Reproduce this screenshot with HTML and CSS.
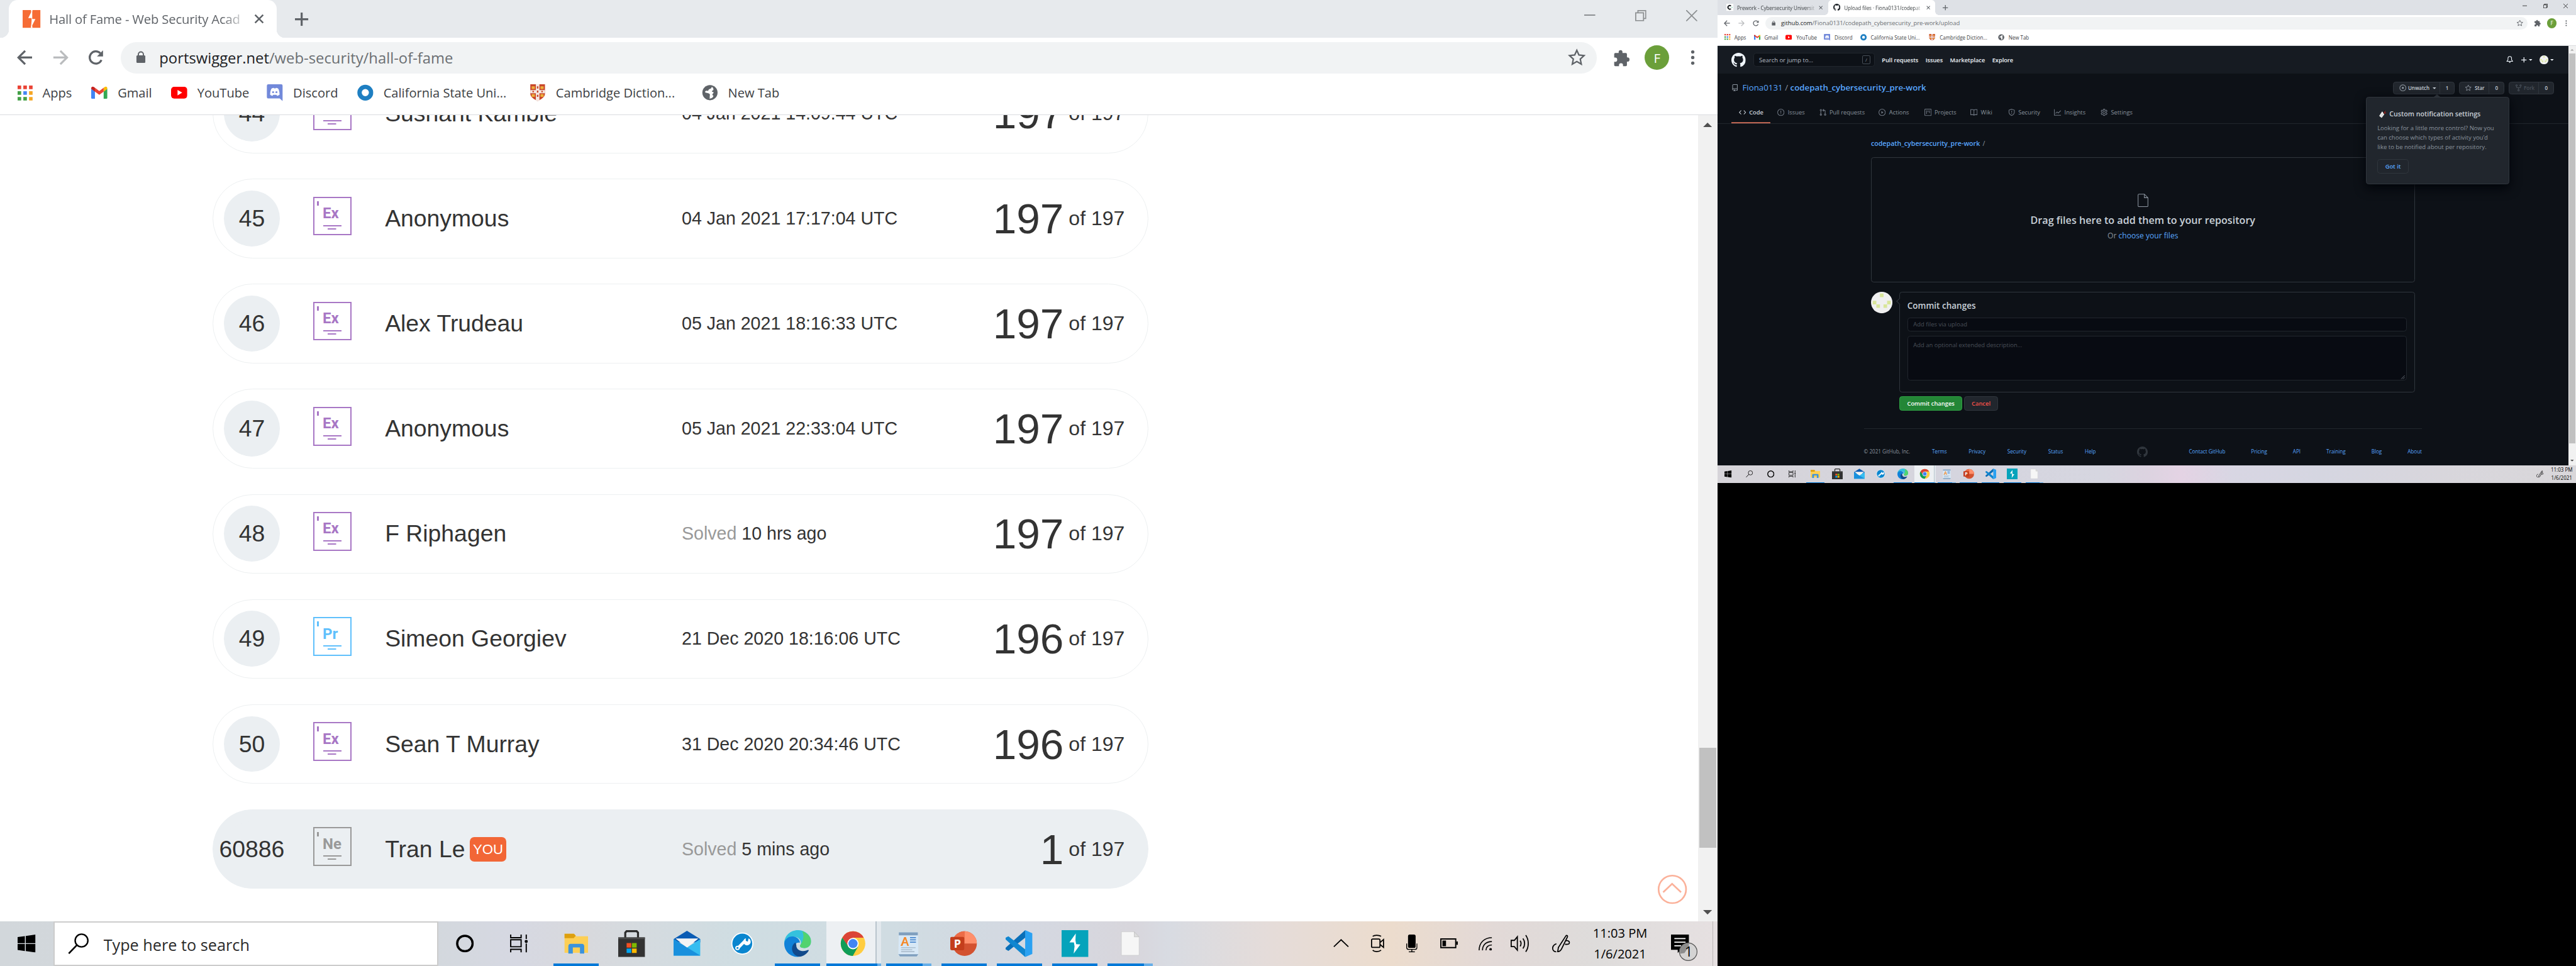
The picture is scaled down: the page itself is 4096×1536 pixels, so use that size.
FILE: index.html
```html
<!DOCTYPE html>
<html lang="en">
<head>
<meta charset="utf-8">
<title>Desktop</title>
<link rel="stylesheet" href="styles.css">
</head>
<body>
<svg class="defs" aria-hidden="true">
  <symbol id="i-bolt" viewBox="0 0 16 16"><rect width="16" height="16" fill="#f66c35"/><path d="M8.6 0 5 7.2h3v2.6L7.4 16 11.4 8H8.6V5z" fill="#fff"/><path d="M7.4 0h1.4L8 4zM7.4 16h1.4L8.300 12z" fill="#fff"/></symbol>
  <symbol id="i-x" viewBox="0 0 10 10"><path d="M1 1l8 8M9 1L1 9" stroke="currentColor" stroke-width="1.6"/></symbol>
  <symbol id="i-plus" viewBox="0 0 12 12"><path d="M6 0v12M0 6h12" stroke="currentColor" stroke-width="1.8"/></symbol>
  <symbol id="i-min" viewBox="0 0 10 10"><path d="M0 4.500h10" stroke="currentColor"/></symbol>
  <symbol id="i-restore" viewBox="0 0 10 10"><path d="M.5 2.500h7v7h-7zM2.500 2.500v-2h7v7h-2" fill="none" stroke="currentColor"/></symbol>
  <symbol id="i-close" viewBox="0 0 10 10"><path d="M0 0l10 10M10 0L0 10" stroke="currentColor"/></symbol>
  <symbol id="i-back" viewBox="0 0 14 14"><path d="M13.500 7H1.500M7.300 1L1.300 7l6 6" fill="none" stroke="currentColor" stroke-width="1.8"/></symbol>
  <symbol id="i-fwd" viewBox="0 0 14 14"><path d="M.5 7h12M6.700 1l6 6-6 6" fill="none" stroke="currentColor" stroke-width="1.8"/></symbol>
  <symbol id="i-reload" viewBox="0 0 14 14"><path d="M12 9.200A5.500 5.500 0 1 1 11 3.200" fill="none" stroke="currentColor" stroke-width="1.800"/><path d="M13.400.6v5.400H8z" fill="currentColor"/></symbol>
  <symbol id="i-lock" viewBox="0 0 10 12"><rect x=".6" y="4" width="8.800" height="7.500" rx="1" fill="currentColor"/><path d="M2.500 4.500V3a2.500 2.500 0 0 1 5 0v1.500" fill="none" stroke="currentColor" stroke-width="1.200"/></symbol>
  <symbol id="i-star" viewBox="0 0 16 16"><path d="M8 1.700l1.900 4.200 4.600.5-3.400 3.100.9 4.500-4-2.300L4 14l.9-4.500L1.500 6.400l4.600-.5z" fill="none" stroke="currentColor" stroke-width="1.300"/></symbol>
  <symbol id="i-puzzle" viewBox="0 0 16 16"><path d="M1.500 4.500a1 1 0 0 1 1-1H5.500V2.700a1.700 1.700 0 0 1 3.400 0v.8h3a1 1 0 0 1 1 1v3h.4a1.900 1.900 0 0 1 0 3.800h-.4v3a1 1 0 0 1-1 1H9.400v-.9a1.800 1.800 0 0 0-3.600 0v.9H2.500a1 1 0 0 1-1-1v-2.900h.8a1.900 1.900 0 0 0 0-3.800h-.8z" fill="currentColor"/></symbol>
  <symbol id="i-dots" viewBox="0 0 4 14"><g fill="currentColor"><circle cx="2" cy="2" r="1.500"/><circle cx="2" cy="7" r="1.500"/><circle cx="2" cy="12" r="1.500"/></g></symbol>
  <symbol id="i-apps" viewBox="0 0 14 14"><g fill="#ea4335"><path d="M0 0h3.300v3.300H0zM5.300 0h3.300v3.300H5.300zM10.600 0h3.300v3.300h-3.300z"/></g><path d="M0 5.300h3.300v3.300H0zM0 10.600h3.300v3.300H0z" fill="#43a047"/><path d="M5.300 5.300h3.300v3.300H5.300z" fill="#4285f4"/><path d="M5.300 10.600h3.300v3.300H5.300z" fill="#43a047"/><path d="M10.600 5.300h3.300v3.300h-3.300zM10.600 10.600h3.300v3.300h-3.300z" fill="#f5a623"/></symbol>
  <symbol id="i-gmail" viewBox="0 0 16 12"><path d="M0 2v9a1 1 0 0 0 1 1h2.700V4.700z" fill="#4285f4"/><path d="M16 2v9a1 1 0 0 1-1 1h-2.700V4.700z" fill="#34a853"/><path d="M12.300 1.200V5L16 2.300V1.600C16 .1 14.300-.4 13.200.5z" fill="#fbbc04"/><path d="M3.700 5V1.200L8 4.400l4.300-3.200V5L8 8.200z" fill="#ea4335"/><path d="M0 1.600v.7L3.700 5V1.200L2.800.5C1.700-.4 0 .1 0 1.600z" fill="#c5221f"/></symbol>
  <symbol id="i-yt" viewBox="0 0 16 12"><rect width="16" height="11.600" y=".2" rx="3" fill="#f00"/><path d="M6.400 3.300v5.400L11 6z" fill="#fff"/></symbol>
  <symbol id="i-discord" viewBox="0 0 16 17"><path d="M1.500 0h13A1.500 1.500 0 0 1 16 1.500V17l-3-2.600H1.500A1.500 1.500 0 0 1 0 13V1.500A1.500 1.500 0 0 1 1.500 0z" fill="#7289da"/><path d="M3.300 10.500c0-3 .8-5.300 1.500-6.200 1-.6 1.800-.7 2.200-.7l.3.600h1.600l.3-.6c.5 0 1.300.2 2.200.7.700.9 1.500 3.200 1.500 6.200-.8.8-1.800 1.100-2.600 1.100l-.6-.9H6.400l-.6.900c-.8 0-1.700-.3-2.500-1.100z" fill="#fff"/><circle cx="6.300" cy="8" r="1" fill="#7289da"/><circle cx="9.700" cy="8" r="1" fill="#7289da"/></symbol>
  <symbol id="i-csu" viewBox="0 0 16 16"><circle cx="8" cy="8" r="5.700" fill="#fff" stroke="#1e7fc2" stroke-width="4.300"/></symbol>
  <symbol id="i-camb" viewBox="0 0 14 16"><path d="M0 0h14v9c0 3.500-4 5.500-7 7-3-1.500-7-3.500-7-7z" fill="#c9472b"/><path d="M1.300 2h3v2.500h-3zM9.700 2h3v2.500h-3zM1.300 9.500h3V12h-3zM9.700 9.500h3V12h-3z" fill="#edb13c"/><path d="M5.300 0h3.400v16H5.300zM0 5.500h14v3H0z" fill="#f4e9e4"/><path d="M6.300 2h1.400v2H6.300zM6.300 6h1.400v2H6.300zM6.300 10h1.400v2H6.300zM2 6.300h1.500v1.300H2zM10.500 6.300H12v1.300h-1.500z" fill="#c9472b"/></symbol>
  <symbol id="i-globe" viewBox="0 0 16 16"><circle cx="8" cy="8" r="7.500" fill="#5f6368"/><path d="M9.800 2.200c-.3 1.700-1.400 2-2.500 2.300-.8.300-.6 1.500-1.500 1.700-1 .2-1.500-.7-2.700 1 .2 1.200 2.400 1 3.700 1.500 1.300.4 1.300 1.500 1 2.500-.2.800.3 1.700-.3 2.600 2.500.1 3.800-1.400 3.900-2.700-1.500-.6-1-1.700-.3-2.300.8-.7.600-1.500-.6-1.600-.8 0-.9-1.200.1-1.300 1.300-.2 1.200-2.500-.8-3.700z" fill="#fff"/></symbol>
  <symbol id="i-codepath" viewBox="0 0 16 16"><rect width="16" height="16" fill="#fff"/><path d="M10.300 5A4 4 0 1 0 10.300 11" fill="none" stroke="#1b1f23" stroke-width="2.600"/><path d="M12 6.500L14 8l-2 1.500z" fill="#3dbb85"/></symbol>
  <symbol id="i-gh" viewBox="0 0 16 16"><path fill="currentColor" d="M8 0C3.580 0 0 3.580 0 8c0 3.540 2.290 6.530 5.470 7.590.4.070.55-.17.55-.38 0-.19-.01-.82-.01-1.490-2.010.37-2.530-.49-2.690-.94-.09-.23-.48-.94-.82-1.130-.28-.15-.68-.52-.01-.53.63-.01 1.080.58 1.230.82.72 1.210 1.870.87 2.330.66.070-.52.280-.87.510-1.070-1.780-.2-3.640-.89-3.640-3.950 0-.87.310-1.590.82-2.150-.08-.2-.36-1.020.08-2.120 0 0 .67-.21 2.200.82.64-.18 1.320-.27 2-.27.68 0 1.360.09 2 .27 1.530-1.040 2.200-.82 2.200-.82.44 1.100.16 1.920.08 2.120.51.56.82 1.270.82 2.150 0 3.070-1.870 3.750-3.650 3.950.29.25.54.73.54 1.480 0 1.070-.01 1.930-.01 2.200 0 .21.150.46.55.38A8.013 8.013 0 0 0 16 8c0-4.420-3.580-8-8-8z"/></symbol>
  <symbol id="i-repo" viewBox="0 0 16 16"><path fill="currentColor" fill-rule="evenodd" d="M2 2.500A2.500 2.500 0 0 1 4.500 0h8.750a.75.750 0 0 1 .75.750v12.500a.75.750 0 0 1-.75.750h-2.500a.75.750 0 1 1 0-1.500h1.750v-2h-8a1 1 0 0 0-.714 1.700.75.750 0 0 1-1.072 1.050A2.495 2.495 0 0 1 2 11.500v-9zm10.500-1V9h-8c-.356 0-.694.074-1 .208V2.500a1 1 0 0 1 1-1h8zM5 12.250v3.250a.25.250 0 0 0 .4.200l1.450-1.087a.25.250 0 0 1 .3 0L8.600 15.700a.25.250 0 0 0 .4-.2v-3.250a.25.250 0 0 0-.25-.25h-3.500a.25.250 0 0 0-.25.250z"/></symbol>
  <g fill="none" stroke="currentColor" stroke-width="1.500">
    <symbol id="i-code" viewBox="0 0 16 16"><path class="ln" d="M5 3.700L1 8l4 4.300M11 3.700L15 8l-4 4.300"/></symbol>
    <symbol id="i-issue" viewBox="0 0 16 16"><circle class="ln" cx="8" cy="8" r="7.200"/><path class="ln" d="M8 4v5M8 10.500v1.500"/></symbol>
    <symbol id="i-pr" viewBox="0 0 16 16"><circle class="ln" cx="3.200" cy="3" r="1.600"/><circle class="ln" cx="3.200" cy="13" r="1.600"/><circle class="ln" cx="12.800" cy="13" r="1.600"/><path class="ln" d="M3.200 4.800v6.400M12.800 11.200V5a1.600 1.600 0 0 0-1.600-1.700H8M10 .8L7.500 3.300 10 5.800"/></symbol>
    <symbol id="i-play" viewBox="0 0 16 16"><circle class="ln" cx="8" cy="8" r="7.200"/><path d="M6.300 5v6L11 8z" fill="currentColor"/></symbol>
    <symbol id="i-proj" viewBox="0 0 16 16"><rect class="ln" x=".8" y=".8" width="14.400" height="14.400" rx="1"/><path class="ln" d="M4.700 3.500v8M8 3.500v4M11.300 3.500v6"/></symbol>
    <symbol id="i-book" viewBox="0 0 16 16"><path class="ln" d="M8 4a2.500 2.500 0 0 0-2.500-2.300H.8v11.500h5A2.200 2.200 0 0 1 8 15a2.200 2.200 0 0 1 2.200-1.800h5V1.700h-4.700A2.500 2.500 0 0 0 8 4zv11"/></symbol>
    <symbol id="i-shield" viewBox="0 0 16 16"><path class="ln" d="M8 .9l6 2v4.600c0 3.500-2.500 6-6 7.500-3.500-1.500-6-4-6-7.500V2.900zM8 4.500v4M8 10v1.500"/></symbol>
    <symbol id="i-graph" viewBox="0 0 16 16"><path class="ln" d="M.8 1v13.300h15M3.500 10.500L7 7l2.500 2.500L15.200 4"/></symbol>
    <symbol id="i-gear" viewBox="0 0 16 16"><circle class="ln" cx="8" cy="8" r="2.600"/><path class="ln" d="M6.700.9h2.600l.5 2 1.500.8 2-.6 1.300 2.200-1.500 1.500v2.400l1.500 1.500-1.300 2.200-2-.6-1.500.8-.5 2H6.700l-.5-2-1.500-.8-2 .6-1.300-2.200 1.500-1.500V6.800L1.400 5.300l1.300-2.200 2 .6 1.500-.8z"/></symbol>
    <symbol id="i-eye" viewBox="0 0 16 16"><circle class="ln" cx="8" cy="8" r="6.800"/><circle cx="8" cy="8" r="2.400" fill="currentColor"/></symbol>
    <symbol id="i-fork" viewBox="0 0 16 16"><circle class="ln" cx="3.500" cy="2.700" r="1.600"/><circle class="ln" cx="12.500" cy="2.700" r="1.600"/><circle class="ln" cx="8" cy="13.300" r="1.600"/><path class="ln" d="M3.500 4.500v1.700c0 .9.600 1.500 1.500 1.500h6c.9 0 1.500-.6 1.500-1.500V4.500M8 7.700v4"/></symbol>
    <symbol id="i-bell" viewBox="0 0 16 16"><path class="ln" d="M8 1a4 4 0 0 0-4 4v3.500L1.700 12h12.600L12 8.500V5a4 4 0 0 0-4-4z"/><path d="M6 13.500h4a2 2 0 0 1-4 0z" fill="currentColor"/></symbol>
    <symbol id="i-file" viewBox="0 0 24 30"><path class="ln" d="M3 1h12l8 8v18a2 2 0 0 1-2 2H3a2 2 0 0 1-2-2V3a2 2 0 0 1 2-2zM15 1v8h8"/></symbol>
  </g>
  <symbol id="i-caret" viewBox="0 0 8 4"><path d="M0 0h8L4 4z" fill="currentColor"/></symbol>
  <symbol id="i-ident" viewBox="0 0 48 48"><circle cx="24" cy="24" r="24" fill="#f0f0f0"/><path d="M20 4h8v8h-8zM4 20h8v8H4zM36 20h8v8h-8zM12 28h8v8h-8zM28 28h8v8h-8z" fill="#d9e69a"/></symbol>
  <symbol id="i-memo" viewBox="0 0 18 18"><path d="M8 3L1.500 13l5.500 4.500L14 8z" fill="#eee"/><path d="M6.500 9.500l3.500 2M5 12l3 2" stroke="#999"/><path d="M10 6l4-6 1 5 3 .5-5 4.500z" fill="#111"/><path d="M12 7l3-5M12.500 7.500L17 6" stroke="#d33" stroke-width="1.300"/></symbol>

  <symbol id="t-win" viewBox="0 0 16 16"><path d="M0 2.300L6.500 1.400v6.300H0zM7.300 1.300L16 0v7.700H7.300zM0 8.400h6.500v6.300L0 13.800zM7.300 8.400H16V16l-8.700-1.200z"/></symbol>
  <symbol id="t-search" viewBox="0 0 20 20"><circle cx="12.800" cy="6.800" r="6" fill="none" stroke="#000" stroke-width="1.400"/><path d="M8.500 11L.8 19" stroke="#000" stroke-width="1.600"/></symbol>
  <symbol id="t-cortana" viewBox="0 0 16 16"><circle cx="8" cy="8" r="6.900" fill="none" stroke="#000" stroke-width="2"/></symbol>
  <symbol id="t-view" viewBox="0 0 16 16"><path d="M.6 0v2.800h9.300V0M.6 4.600h9.300v6.300H.6zM.6 16v-2.800h9.300V16M14.500 0v4M14.500 8v8" fill="none" stroke="#000" stroke-width="1.100"/><circle cx="14.500" cy="6.200" r="1.400"/></symbol>
  <symbol id="t-folder" viewBox="0 0 24 24"><path d="M1.500 3.300h8.500l2 2.200h10.500v14.700h-21z" fill="#fdcf55"/><path d="M1.500 3.300h8.500l1.500 1.800-1.800 2.100H1.500z" fill="#dd9f0f"/><path d="M4.900 21v-6.500c0-1.500.8-2.200 2-2.200h10.200c1.200 0 2 .7 2 2.200V21H15.300v-5.500H8.900V21z" fill="#3c93dd"/></symbol>
  <symbol id="t-store" viewBox="0 0 24 24"><path d="M6.300 7V2.200L7.500.9h9l1.200 1.300V7" fill="none" stroke="#2b2b2b" stroke-width="1.800"/><path d="M0 6.400h24V24H0z" fill="#323232"/><path d="M0 6.400h24v1.600H0z" fill="#4a4a4a"/><path d="M7.500 11.600h4.200v4H7.500z" fill="#f25022"/><path d="M12.300 11.600h4.200v4h-4.200z" fill="#7fba00"/><path d="M7.500 16.400h4.200v4H7.500z" fill="#00a4ef"/><path d="M12.300 16.400h4.200v4h-4.200z" fill="#ffb900"/></symbol>
  <symbol id="t-mail" viewBox="0 0 24 24"><path d="M0 8L12 .5 24 8v3H0z" fill="#0b5cb4"/><path d="M0 8l12 7.500L24 8v14.800H0z" fill="#36bdf0"/><path d="M2 7.600h20l-10 8z" fill="#f4f4f4"/><path d="M0 8l24 14.800H0z" fill="#1990dd"/><path d="M2 7.600h20L12 15.500z" fill="#f4f4f4"/></symbol>
  <symbol id="t-wrench" viewBox="0 0 24 24"><circle cx="12" cy="12" r="9.400" fill="#0a86cf" stroke="#fff"/><path d="M7.800 16.200l7-7" stroke="#fff" stroke-width="2.600"/><circle cx="7.700" cy="15.900" r="2" fill="#fff"/><circle cx="7.700" cy="15.900" r=".9" fill="#0a86cf"/><path d="M17.600 7.300a3.300 3.300 0 1 1-2.500-.1v2.300l1.800.8z" fill="#fff"/></symbol>
  <symbol id="t-edge" viewBox="0 0 24 24"><path d="M0 12C0 5 5.500 0 12 0s12 4.500 12 10c0 4-3 6-6 6-3.500 0-4.500-1.600-3.600-2.800C16 11 14 6 9 6 4 6 1 9 0 12z" fill="#35c1dd"/><path d="M16 .8c5 1.700 8 5.400 8 9.200 0 4-3 6-6 6-3.500 0-4.500-1.600-3.600-2.800C17.500 9 18 4 16 .8z" fill="#52d36f"/><path d="M0 12c.3-4 4-6.800 8-6.400 3.700.3 6 3 6 5.700-4-1.300-6.500 4-3 8.200 1.500 1.800 3.500 2.500 5.500 2.500C14 24 12.500 24 12 24 5 24 0 18.500 0 12z" fill="#1182d8"/><path d="M10 11c-5 3-4 12 4 12.800 3.500-.5 6.500-2.800 8-5.800-.5-.4-1-.2-2 .2-5 1.800-9.500-1-9.200-5z" fill="#114a8b"/></symbol>
  <symbol id="t-chrome" viewBox="0 0 24 24"><circle cx="12" cy="12" r="11" fill="#ffcd40"/><path d="M12 1a11 11 0 0 1 9.600 5.800H12L7.500 14.500 2.400 6.700A11 11 0 0 1 12 1z" fill="#db4437"/><path d="M2.400 6.700A11 11 0 0 0 11.800 23l4.700-8.300-9-.7z" fill="#0f9d58"/><circle cx="12" cy="12" r="5.100" fill="#fff"/><circle cx="12" cy="12" r="4.100" fill="#4285f4"/></symbol>
  <symbol id="t-wordpad" viewBox="0 0 24 24"><path d="M3.500 2h17l.5 20.500-1.500 1H4.500L3 22.500z" fill="#d7e8f6"/><path d="M3.500 2h17v2.600h-17zM3 21.500h18l-1.500 2h-15z" fill="#7f9fbe"/><path d="M13.500 6.700h5.300M13.500 8.700h5.300M13.500 10.700h5.300" stroke="#4a88cf"/><path d="M5.500 15.700h13M5.500 17.500h10M5.500 19.300h12" stroke="#a4b5c6" stroke-width=".8"/><path d="M5 14L8.300 6.200h1.500L12.500 14H11l-.7-2.200H7.600L6.700 14zM8 10.700h2L9 8z" fill="#f58a2b"/></symbol>
  <symbol id="t-ppt" viewBox="0 0 24 24"><circle cx="12.800" cy="12" r="11" fill="#d35230"/><path d="M12.800 1A11 11 0 0 0 1.800 12h11z" fill="#ed6c47"/><path d="M12.800 1a11 11 0 0 1 11 11h-11z" fill="#ff8f6b"/><rect y="6" width="12.500" height="12" rx="1.200" fill="#c43e1c"/><text x="3.300" y="15.600" font-family="Open Sans" font-weight="700" font-size="10" fill="#fff">P</text></symbol>
  <symbol id="t-vsc" viewBox="0 0 24 24"><path d="M17.500 0L24 2.800v18.400L17.500 24z" fill="#2aa1f2"/><path d="M17.500 0v6.800L2.500 18.500 0 17.200v-1.500z" fill="#0a6fb8"/><path d="M17.500 24v-6.800L2.500 5.500 0 6.800v1.500z" fill="#1086d0"/></symbol>
  <symbol id="t-burp" viewBox="0 0 24 24"><path d="M0 0h24v24H0z" fill="#05a3bb"/><path d="M12.700 3L7 11h4l.6 3.500-.8 6.500 6-8.200-3.800-.3-.6-3.500z" fill="#fff"/></symbol>
  <symbol id="t-doc" viewBox="0 0 24 24"><path d="M4 1.500h11.500l4.300 4.300v16.700H4z" fill="#f6f6f6" stroke="#ccc" stroke-width=".4"/><path d="M15.500 1.500v4.500h4.300z" fill="#ddd" stroke="#bbb" stroke-width=".4"/></symbol>
  <symbol id="t-pen" viewBox="0 0 16 16"><path d="M5.600 11.500L12.300 1.200c.5-.8 1.700-.2 1.400.8L8.500 12.700c-.8 1.600-2.300 2.500-3.500 2.500zM3.800 8.200C1 9 0 11.500.7 13.500c.5 1.200 1.600 1.900 3 1.900M12.500 5.500c2.500-.4 4 1.800 2.300 2.900-1 .5-2.500.3-3.300.3" fill="none" stroke="#000"/></symbol>
  <symbol id="t-up" viewBox="0 0 14 8"><path d="M.5 7L7 .7 13.500 7" fill="none" stroke="#000"/></symbol>
  <symbol id="t-cam" viewBox="0 0 12 16"><rect x=".5" y="4" width="7.500" height="7.500" rx="1" fill="none" stroke="#000"/><path d="M8.200 7l3-2.500v7l-3-2.500M1.500 1.600C3 .3 7 .3 9 1.600M1.500 14C3 15.600 7 15.600 9 14" fill="none" stroke="#000"/></symbol>
  <symbol id="t-mic" viewBox="0 0 10 16"><rect x="1.600" width="6.800" height="12" rx="1.500"/><path d="M.4 8v3.500c0 1.300.8 1.800 2 1.800h5.200c1.200 0 2-.5 2-1.800V8M5 13.500v2.200M2.300 15.500h5.400" fill="none" stroke="#000" stroke-width=".8"/></symbol>
  <symbol id="t-bat" viewBox="0 0 16 9"><path d="M.6.6h13.300v7.700H.6z" fill="none" stroke="#000" stroke-width="1.100"/><path d="M2 2h3.200v5H2zM14.300 2.800h1.500v3h-1.500z"/></symbol>
  <symbol id="t-wifi" viewBox="0 0 12 12"><circle cx="10.800" cy="11" r="1.200"/><path d="M.5 12C.5 5 5 .6 12 .6M3.500 12c0-5 3.200-8 8.500-8M6.600 12c0-3 2-5 5.400-5" fill="none" stroke="#000" stroke-width=".9"/></symbol>
  <symbol id="t-vol" viewBox="0 0 17 16"><path d="M.5 5.200h2.800L6 2v12l-2.700-3.200H.5zM8.500 5.500c1 1.500 1 3.500 0 5M11 3.500c2 2.500 2 6.500 0 9M13.500.6c3 4 3 10.800 0 14.800" fill="none" stroke="#000"/></symbol>
  <symbol id="t-note" viewBox="0 0 24 24"><path d="M0 0h16v13.700H9L6 16.500v-2.800H0z"/><path d="M3 3.600h10M3 6.800h10M3 10h6" stroke="#fff"/><circle cx="15.400" cy="15.400" r="7.900" fill="#d4d3d3" stroke="#555" stroke-width=".7"/><path d="M8 13.700A8 8 0 0 1 16 7.600v3l-4 6-4 .500z" fill="#8d8d8d"/><text x="12.400" y="19.600" font-family="Open Sans" font-size="12" fill="#000">1</text></symbol>
</svg>

<main class="desktop">
  <section class="monitor monitor-main">
    <header class="browser browser-idle">
      <div class="tabstrip">
        <div class="tab tab-active"><svg class="fav"><use href="#i-bolt"/></svg><span class="tab-title">Hall of Fame - Web Security Acad</span><svg class="tab-x"><use href="#i-x"/></svg></div>
        <svg class="newtab"><use href="#i-plus"/></svg>
        <div class="winctl"><svg><use href="#i-min"/></svg><svg><use href="#i-restore"/></svg><svg><use href="#i-close"/></svg></div>
      </div>
      <div class="toolbar">
        <svg class="nav"><use href="#i-back"/></svg><svg class="nav nav-off"><use href="#i-fwd"/></svg><svg class="nav"><use href="#i-reload"/></svg>
        <div class="omnibox"><svg class="lock"><use href="#i-lock"/></svg><span class="url"><b>portswigger.net</b>/web-security/hall-of-fame</span><svg class="star"><use href="#i-star"/></svg></div>
        <svg class="puzzle"><use href="#i-puzzle"/></svg><span class="profile">F</span><svg class="dots"><use href="#i-dots"/></svg>
      </div>
      <nav class="bookmarks">
        <a><svg><use href="#i-apps"/></svg><span>Apps</span></a><a><svg><use href="#i-gmail"/></svg><span>Gmail</span></a><a><svg><use href="#i-yt"/></svg><span>YouTube</span></a><a><svg><use href="#i-discord"/></svg><span>Discord</span></a><a><svg><use href="#i-csu"/></svg><span>California State Uni...</span></a><a><svg><use href="#i-camb"/></svg><span>Cambridge Diction...</span></a><a><svg><use href="#i-globe"/></svg><span>New Tab</span></a>
      </nav>
    </header>

    <div class="page">
      <div class="hall">
        <ol class="ranks">
          <li class="rank"><span class="pos">44</span><span class="level ex"><b>Ex</b></span><span class="name">Sushant Kamble</span><span class="when">04 Jan 2021 14:09:44 UTC</span><span class="score">197</span><span class="total">of 197</span></li>
          <li class="rank"><span class="pos">45</span><span class="level ex"><b>Ex</b></span><span class="name">Anonymous</span><span class="when">04 Jan 2021 17:17:04 UTC</span><span class="score">197</span><span class="total">of 197</span></li>
          <li class="rank"><span class="pos">46</span><span class="level ex"><b>Ex</b></span><span class="name">Alex Trudeau</span><span class="when">05 Jan 2021 18:16:33 UTC</span><span class="score">197</span><span class="total">of 197</span></li>
          <li class="rank"><span class="pos">47</span><span class="level ex"><b>Ex</b></span><span class="name">Anonymous</span><span class="when">05 Jan 2021 22:33:04 UTC</span><span class="score">197</span><span class="total">of 197</span></li>
          <li class="rank"><span class="pos">48</span><span class="level ex"><b>Ex</b></span><span class="name">F Riphagen</span><span class="when"><i>Solved</i> 10 hrs ago</span><span class="score">197</span><span class="total">of 197</span></li>
          <li class="rank"><span class="pos">49</span><span class="level pr"><b>Pr</b></span><span class="name">Simeon Georgiev</span><span class="when">21 Dec 2020 18:16:06 UTC</span><span class="score">196</span><span class="total">of 197</span></li>
          <li class="rank"><span class="pos">50</span><span class="level ex"><b>Ex</b></span><span class="name">Sean T Murray</span><span class="when">31 Dec 2020 20:34:46 UTC</span><span class="score">196</span><span class="total">of 197</span></li>
          <li class="rank rank-me"><span class="pos">60886</span><span class="level ne"><b>Ne</b></span><span class="name">Tran Le<em>YOU</em></span><span class="when"><i>Solved</i> 5 mins ago</span><span class="score">1</span><span class="total">of 197</span></li>
        </ol>
      </div>
      <svg class="totop" viewBox="0 0 26 26"><circle cx="13" cy="13" r="12.300"/><path d="M4.800 15.600L12.800 8l8 7.600"/></svg>
      <div class="scrollbar"><svg><use href="#i-caret"/></svg><i></i><svg><use href="#i-caret"/></svg></div>
    </div>

    <footer class="taskbar taskbar-main">
      <span class="sys"><svg class="ic16"><use href="#t-win"/></svg></span>
      <div class="searchbox"><svg><use href="#t-search"/></svg><span>Type here to search</span></div>
      <span class="sys"><svg class="ic16"><use href="#t-cortana"/></svg></span>
      <span class="sys"><svg class="ic16"><use href="#t-view"/></svg></span>
      <div class="apps">
        <span class="run"><svg><use href="#t-folder"/></svg></span><span><svg><use href="#t-store"/></svg></span><span><svg><use href="#t-mail"/></svg></span><span><svg><use href="#t-wrench"/></svg></span><span class="run"><svg><use href="#t-edge"/></svg></span><span class="run multi focus"><svg><use href="#t-chrome"/></svg></span><span class="run multi"><svg><use href="#t-wordpad"/></svg></span><span class="run"><svg><use href="#t-ppt"/></svg></span><span class="run"><svg><use href="#t-vsc"/></svg></span><span class="run"><svg><use href="#t-burp"/></svg></span><span class="run multi"><svg><use href="#t-doc"/></svg></span>
      </div>
      <div class="tray">
        <svg class="y-up"><use href="#t-up"/></svg><svg class="y-cam"><use href="#t-cam"/></svg><svg class="y-mic"><use href="#t-mic"/></svg><svg class="y-bat"><use href="#t-bat"/></svg><svg class="y-wifi"><use href="#t-wifi"/></svg><svg class="y-vol"><use href="#t-vol"/></svg><svg class="ic16"><use href="#t-pen"/></svg>
      </div>
      <div class="clock"><span>11:03 PM</span><span>1/6/2021</span></div>
      <svg class="note"><use href="#t-note"/></svg>
      <i class="peek"></i>
    </footer>
  </section>

  <section class="monitor monitor-side">
    <header class="browser">
      <div class="tabstrip">
        <div class="tab"><svg class="fav"><use href="#i-codepath"/></svg><span class="tab-title">Prework - Cybersecurity Universit</span><svg class="tab-x"><use href="#i-x"/></svg></div>
        <div class="tab tab-active"><svg class="fav"><use href="#i-gh"/></svg><span class="tab-title">Upload files · Fiona0131/codepat</span><svg class="tab-x"><use href="#i-x"/></svg></div>
        <svg class="newtab"><use href="#i-plus"/></svg>
        <div class="winctl"><svg><use href="#i-min"/></svg><svg><use href="#i-restore"/></svg><svg><use href="#i-close"/></svg></div>
      </div>
      <div class="toolbar">
        <svg class="nav"><use href="#i-back"/></svg><svg class="nav nav-off"><use href="#i-fwd"/></svg><svg class="nav"><use href="#i-reload"/></svg>
        <div class="omnibox"><svg class="lock"><use href="#i-lock"/></svg><span class="url"><b>github.com</b>/Fiona0131/codepath_cybersecurity_pre-work/upload</span><svg class="star"><use href="#i-star"/></svg></div>
        <svg class="puzzle"><use href="#i-puzzle"/></svg><span class="profile">F</span><svg class="dots"><use href="#i-dots"/></svg>
      </div>
      <nav class="bookmarks">
        <a><svg><use href="#i-apps"/></svg><span>Apps</span></a><a><svg><use href="#i-gmail"/></svg><span>Gmail</span></a><a><svg><use href="#i-yt"/></svg><span>YouTube</span></a><a><svg><use href="#i-discord"/></svg><span>Discord</span></a><a><svg><use href="#i-csu"/></svg><span>California State Uni...</span></a><a><svg><use href="#i-camb"/></svg><span>Cambridge Diction...</span></a><a><svg><use href="#i-globe"/></svg><span>New Tab</span></a>
      </nav>
    </header>

    <div class="page">
      <div class="gh">
        <header class="gh-head">
          <svg class="gh-logo"><use href="#i-gh"/></svg>
          <div class="gh-search"><span>Search or jump to...</span><kbd>/</kbd></div>
          <nav class="gh-nav"><a>Pull requests</a><a>Issues</a><a>Marketplace</a><a>Explore</a></nav>
          <div class="gh-user"><svg class="ic16"><use href="#i-bell"/></svg><svg class="gh-plus"><use href="#i-plus"/></svg><svg class="caret"><use href="#i-caret"/></svg><svg class="gh-ava"><use href="#i-ident"/></svg><svg class="caret"><use href="#i-caret"/></svg></div>
        </header>
        <div class="repo-head">
          <svg class="ic16"><use href="#i-repo"/></svg><h1><a>Fiona0131</a><i>/</i><a class="strong">codepath_cybersecurity_pre-work</a></h1>
          <div class="social">
            <div class="sbtn sb-watch"><span><svg class="ic16"><use href="#i-eye"/></svg>Unwatch<svg class="caret"><use href="#i-caret"/></svg></span><b>1</b>
              <aside class="pop">
                <h3><svg><use href="#i-memo"/></svg><span>Custom notification settings</span></h3>
                <p>Looking for a little more control? Now you<br>can choose which types of activity you’d<br>like to be notified about per repository.</p>
                <button>Got it</button>
              </aside>
            </div>
            <div class="sbtn sb-star"><span><svg class="ic16"><use href="#i-star"/></svg>Star</span><b>0</b></div>
            <div class="sbtn sb-fork"><span><svg class="ic16"><use href="#i-fork"/></svg>Fork</span><b>0</b></div>
          </div>
        </div>
        <nav class="repo-tabs">
          <a class="on"><svg><use href="#i-code"/></svg><span>Code</span></a><a><svg><use href="#i-issue"/></svg><span>Issues</span></a><a><svg><use href="#i-pr"/></svg><span>Pull requests</span></a><a><svg><use href="#i-play"/></svg><span>Actions</span></a><a><svg><use href="#i-proj"/></svg><span>Projects</span></a><a><svg><use href="#i-book"/></svg><span>Wiki</span></a><a><svg><use href="#i-shield"/></svg><span>Security</span></a><a><svg><use href="#i-graph"/></svg><span>Insights</span></a><a><svg><use href="#i-gear"/></svg><span>Settings</span></a>
        </nav>
        <div class="upload">
          <p class="crumb"><a>codepath_cybersecurity_pre-work</a><i>/</i></p>
          <div class="drop"><svg><use href="#i-file"/></svg><h2>Drag files here to add them to your repository</h2><p>Or <a>choose your files</a></p></div>
          <div class="commit">
            <svg class="commit-ava"><use href="#i-ident"/></svg>
            <form class="commit-form">
              <div class="commit-box"><i class="notch"></i><h3>Commit changes</h3><div class="field">Add files via upload</div><div class="field area"><span>Add an optional extended description...</span><svg viewBox="0 0 8 8"><path d="M0 8l8-8M4 8l4-4"/></svg></div></div>
              <div class="btns"><button class="btn go" type="button">Commit changes</button><button class="btn no" type="button">Cancel</button></div>
            </form>
          </div>
        </div>
        <footer class="gh-foot">
          <div><span>© 2021 GitHub, Inc.</span><a>Terms</a><a>Privacy</a><a>Security</a><a>Status</a><a>Help</a></div>
          <svg><use href="#i-gh"/></svg>
          <div><a>Contact GitHub</a><a>Pricing</a><a>API</a><a>Training</a><a>Blog</a><a>About</a></div>
        </footer>
      </div>
      <div class="scrollbar"><svg><use href="#i-caret"/></svg><i></i><svg><use href="#i-caret"/></svg></div>
    </div>

    <footer class="taskbar taskbar-side">
      <span class="sys"><svg class="ic16"><use href="#t-win"/></svg></span>
      <span class="sys"><svg class="ic16"><use href="#t-search"/></svg></span>
      <span class="sys"><svg class="ic16"><use href="#t-cortana"/></svg></span>
      <span class="sys"><svg class="ic16"><use href="#t-view"/></svg></span>
      <div class="apps">
        <span class="run"><svg><use href="#t-folder"/></svg></span><span><svg><use href="#t-store"/></svg></span><span><svg><use href="#t-mail"/></svg></span><span><svg><use href="#t-wrench"/></svg></span><span class="run"><svg><use href="#t-edge"/></svg></span><span class="run multi focus"><svg><use href="#t-chrome"/></svg></span><span class="run multi"><svg><use href="#t-wordpad"/></svg></span><span class="run"><svg><use href="#t-ppt"/></svg></span><span class="run"><svg><use href="#t-vsc"/></svg></span><span class="run"><svg><use href="#t-burp"/></svg></span><span class="run multi"><svg><use href="#t-doc"/></svg></span>
      </div>
      <div class="tray"><svg class="ic16"><use href="#t-pen"/></svg></div>
      <div class="clock"><span>11:03 PM</span><span>1/6/2021</span></div>
    </footer>
  </section>
</main>
</body>
</html>
```
FILE: styles.css
```css
* { box-sizing: border-box; }
body { margin: 0; width: 4096px; height: 1536px; overflow: hidden; background: #000; font-family: "Open Sans", "Noto Sans", sans-serif; }
svg { display: block; flex: none; overflow: visible; }
.defs { position: absolute; width: 0; height: 0; }
.ln { fill: none; stroke: currentColor; stroke-width: 1.5; }
.ic16 { width: 16px; height: 16px; }
h1, h2, h3, p, ol { margin: 0; padding: 0; }
i, em { font-style: normal; }
button { font-family: inherit; }

/* Both monitors are laid out in their own logical pixels and scaled here. */
.desktop { display: flex; align-items: flex-start; width: 4096px; }
.monitor { display: flex; flex-direction: column; flex: none; overflow: hidden; }
.monitor-main { width: 1536px; height: 864px; zoom: 1.7777778; background: #fff; }
.monitor-side { width: 1920px; height: 1080px; zoom: .7111111; background: #0d1117; }

/* Browser frame */
.browser { flex: none; height: 102.800px; background: #fff; border-bottom: 1px solid #dadce0; color: #5f6368; }
.tabstrip { display: flex; height: 33.800px; padding-left: 8px; background: #dee1e6; color: #3c4043; }
.browser-idle .tabstrip { background: #e7eaed; color: #5f6368; }
.tab { display: flex; align-items: center; width: 239.500px; padding: 0 11px 0 12px; font-size: 11.400px; position: relative; }
.tab-active { background: #fff; border-radius: 8px 8px 0 0; }
.tab-active::before, .tab-active::after { content: ""; position: absolute; bottom: 0; width: 8px; height: 8px; }
.tab-active::before { left: -8px; background: radial-gradient(circle at 0 0, transparent 8px, #fff 8.300px); }
.tab-active::after { right: -8px; background: radial-gradient(circle at 100% 0, transparent 8px, #fff 8.300px); }
.fav { width: 16px; height: 16px; color: #24292e; }
.tab-title { flex: 1; margin: 0 8px; white-space: nowrap; overflow: hidden; letter-spacing: -.1px; -webkit-mask-image: linear-gradient(90deg, #000 88%, transparent 102%); mask-image: linear-gradient(90deg, #000 88%, transparent 102%); }
.tab-x { width: 9px; height: 9px; color: #5f6368; }
.newtab { width: 12px; height: 12px; margin: 11px 0 0 16.500px; color: #5f6368; }
.winctl { display: flex; gap: 35.500px; margin: 9px 18.200px 0 auto; color: #000; }
.browser-idle .winctl { color: #8d9092; }
.winctl svg { width: 10px; height: 10px; }
.toolbar { display: flex; align-items: center; height: 35.600px; padding-left: 15px; }
.nav { width: 14px; height: 14px; margin-right: 18px; }
.nav-off { color: #babcbe; }
.omnibox { flex: 1; display: flex; align-items: center; height: 28px; margin: 0 14px 0 -3px; padding: 0 10px 0 13.500px; border-radius: 14px; background: #f1f3f4; font-size: 13.300px; }
.browser-idle .omnibox { font-size: 13.400px; }
.lock { width: 9px; height: 11.500px; margin-right: 12px; }
.url { color: #6b6f73; }
.url b { font-weight: 400; color: #202124; }
.star { width: 16px; height: 16px; margin-left: auto; }
.puzzle { width: 16px; height: 16px; margin-right: 13px; }
.profile { display: grid; place-items: center; width: 22px; height: 22px; margin-right: 19px; border-radius: 50%; background: #6b9f3a; color: #fff; font-size: 11.500px; }
.dots { width: 4px; height: 14px; margin-right: 20px; }
.bookmarks { display: grid; grid-template-columns: 66.300px 71.200px 85.700px 80.800px 154.200px 154px 100px; height: 27.400px; padding-left: 15.500px; align-items: center; font-size: 11.300px; color: #3c4043; }
.bookmarks a { display: flex; align-items: center; gap: 9px; white-space: nowrap; }
.bookmarks svg { width: 14.500px; height: 15px; }
.bookmarks a:first-child svg { width: 13.500px; height: 13.500px; }
.page { flex: 1; min-height: 0; display: flex; }
.scrollbar { flex: none; width: 17px; display: flex; flex-direction: column; align-items: center; padding: 7px 0 6px; background: #f1f1f1; color: #505050; }
.scrollbar svg { width: 8px; height: 4px; }
.scrollbar svg:first-child { transform: scaleY(-1); }
.scrollbar i { width: 15px; background: #c1c1c1; }

/* Leaderboard */
.hall { flex: 1; min-width: 0; overflow: hidden; font-family: "Liberation Sans", Arial, sans-serif; color: #333; }
.ranks { list-style: none; width: 837px; margin: -36.900px 0 0 189.900px; display: flex; flex-direction: column; gap: 22.800px; }
.rank { display: grid; grid-template-columns: 50px 34.800px 245.500px 1fr auto auto; align-items: center; height: 71.200px; padding: 0 20.400px 0 9.800px; border: 1px solid #edf0f1; border-radius: 36px; font-size: 21px; white-space: nowrap; }
.rank-me { background: #ebeff2; border-color: #ebeff2; }
.pos { height: 50px; display: flex; align-items: center; justify-content: center; border-radius: 50%; background: #ebeff2; }
.level { width: 34.800px; height: 34.800px; margin: -4.600px 0 0 29.600px; border: 1.400px solid; position: relative; padding: 6px 0 0 7.600px; }
.level b { display: block; font: 700 13.500px/16px Roboto, sans-serif; }
.level::before { content: ""; position: absolute; left: 2.800px; top: 3.100px; width: 1.200px; height: 4px; background: currentColor; }
.level::after { content: ""; position: absolute; left: 7.900px; top: 24.300px; width: 16.300px; height: 4px; background: linear-gradient(currentColor, currentColor) 0 0 / 100% 1.200px no-repeat, linear-gradient(currentColor, currentColor) 50% 100% / 7.600px 1.200px no-repeat; }
.ex { color: #a877c5; }
.pr { color: #60c0fc; }
.ne { color: #999; }
.name { display: flex; align-items: center; margin-left: 59.300px; }
.name em { margin-left: 4px; padding: 0 3px; border-radius: 4px; background: #f26636; color: #fff; font-size: 12.500px; line-height: 22px; }
.when { margin-left: 79.200px; font-size: 16.080px; }
.when i { color: #999; }
.score { font-size: 38px; }
.total { font-size: 18px; margin-left: 4.500px; }
.totop { width: 26px; height: 26px; align-self: flex-end; margin: 0 10.200px 15.500px; fill: none; stroke: #fbb19a; stroke-width: 1.500; }
.monitor-main .scrollbar i { height: 89.600px; margin: 555px 0 auto; }

/* Taskbar */
.taskbar { flex: none; height: 40px; display: flex; align-items: center; color: #000; }
.taskbar-main { background: linear-gradient(90deg, #d2d7db 0, #d3d8dd 25%, #d6d8e2 30%, #d8d9dd 34%, #cfdde2 43%, #d0dce2 52%, #d4d8e1 60%, #d8d6dc 66%, #d8dbe2 68%, #e5dcd9 74%, #ecdccd 81%, #e2d9d7 87%, #dedcdb 93%, #e6e0e1 100%); }
.taskbar-side { background: linear-gradient(90deg, #d6d4d9 0, #d5d5df 30%, #d6d6e0 45%, #dcd3e0 50%, #e4d3e4 54%, #d8d6e3 60%, #d5d6e1 70%, #d8d6dc 84%, #d9d7da 100%); }
.sys { flex: none; width: 48px; display: grid; place-items: center; }
.searchbox { flex: none; width: 344px; height: 40px; display: flex; align-items: center; gap: 13px; padding-left: 11.500px; background: #fff; border: 1.300px solid #ccc; font-size: 14.200px; color: #2b2b2b; }
.searchbox svg { width: 19px; height: 19px; }
.searchbox span { padding-top: 1.500px; }
.apps { display: flex; height: 40px; }
.apps span { display: grid; place-items: center; position: relative; }
.apps svg { width: 24px; height: 24px; }
.taskbar-main .apps { margin-left: 2.500px; }
.taskbar-main .apps span { width: 49.560px; }
.taskbar-side .apps { margin-left: 2.500px; }
.taskbar-side .apps span { width: 49px; }
.run::after { content: ""; position: absolute; left: 4.500px; right: 4.500px; bottom: 0; height: 2px; background: #0078d7; }
.multi::after { background: linear-gradient(90deg, #0078d7 80%, #66aee8 80%); }
.focus { background: linear-gradient(90deg, transparent 0 1px, #edf0f3 1px 45px, #b9c4cd 45px 46px, #e2e8ed 46px); }
.focus::after { left: 1px; right: 0; background: linear-gradient(90deg, #0078d7 93%, #66aee8 93%); }
.tray { display: flex; align-items: center; margin-left: auto; }
.taskbar-main .tray { margin-right: 20px; }
.y-up { width: 14px; height: 8px; margin-right: 20px; }
.y-cam { width: 12px; height: 16px; margin-right: 19.500px; }
.y-mic { width: 10px; height: 16px; margin-right: 20px; }
.y-bat { width: 16px; height: 9px; margin-right: 18.400px; }
.y-wifi { width: 12px; height: 12px; margin-right: 16.700px; }
.y-vol { width: 17px; height: 16px; margin-right: 20px; }
.clock { display: flex; flex-direction: column; align-items: center; flex: none; font-size: 11.300px; line-height: 18.400px; width: 50px; }
.taskbar-main .clock { line-height: 18.800px; }
.note { width: 24px; height: 24px; align-self: flex-start; margin: 12px 13px 0 20.700px; }
.peek { flex: none; width: 4.300px; height: 40px; border-left: 1px solid #bcb7b7; }
.taskbar-side .tray { margin-right: 15px; }
.taskbar-side .clock { margin-right: 7px; line-height: 18px; }

/* Repository page */
.gh { flex: 1; min-width: 0; background: #0d1117; color: #c9d1d9; font-size: 13.300px; display: flex; flex-direction: column; }
.gh a { color: #58a6ff; }
.gh-head { flex: none; display: flex; align-items: center; height: 62px; padding: 0 32px; background: #161b22; color: #f0f6fc; }
.gh-logo { width: 32px; height: 32px; }
.gh-search { display: flex; align-items: center; justify-content: space-between; width: 272px; height: 30px; margin: 0 16px; padding: 0 8px 0 12px; background: #0d1117; border: 1px solid #21262d; border-radius: 6px; color: #b6bdc5; }
.gh-search kbd { display: grid; place-items: center; width: 19px; height: 20px; border: 1px solid #484f58; border-radius: 3px; font: 11px "Open Sans", sans-serif; color: #8b949e; }
.gh-nav { display: flex; gap: 16px; font-size: 13px; font-weight: 600; }
.gh .gh-nav a { color: #f0f6fc; }
.gh-user { display: flex; align-items: center; margin-left: auto; }
.caret { width: 8px; height: 4px; }
.gh-plus { width: 12px; height: 12px; margin: 0 6px 0 17px; }
.gh-ava { width: 20px; height: 20px; margin: 0 4px 0 16px; }
.repo-head { flex: none; display: flex; height: 62px; padding: 18px 32px 0; color: #8b949e; }
.repo-head > .ic16 { margin: 5px 8px 0 0; }
.repo-head h1 { font-size: 18.700px; font-weight: 400; line-height: 27.500px; }
.repo-head h1 i { margin: 0 5px; }
.repo-head .strong { font-weight: 600; }
.social { display: flex; gap: 10px; margin-left: auto; }
.sbtn { position: relative; display: flex; height: 28px; border: 1px solid #30363d; border-radius: 6px; background: #21262d; color: #c9d1d9; font-size: 11.200px; font-weight: 600; }
.sbtn > span { flex: 1; display: flex; align-items: center; padding-left: 12px; border-right: 1px solid #30363d; }
.sbtn > span .ic16 { color: #8b949e; margin-right: 4px; }
.sbtn > span .caret { margin-left: 7px; }
.sbtn b { display: grid; place-items: center; font-weight: 600; width: 30px; }
.sb-watch { width: 137px; }
.sb-star { width: 102px; }
.sb-star > span .ic16 { margin-right: 6px; }
.sb-star b, .sb-fork b { width: 32px; }
.sb-fork { width: 101px; }
.sb-fork > span, .sb-fork > span .ic16 { color: #484f58; }
.pop { position: absolute; left: -62px; top: 33px; width: 320px; height: 195px; padding: 24px; background: #21262d; border: 1px solid #30363d; border-radius: 6px; box-shadow: 0 8px 24px #010409; color: #8b949e; font-weight: 400; z-index: 2; }
.pop::before { content: ""; position: absolute; left: 150px; top: -7px; border: 8px solid transparent; border-top: 0; border-bottom: 7px solid #2a2f36; }
.pop h3 { display: flex; align-items: center; gap: 7px; height: 24px; font-size: 15px; font-weight: 600; color: #c9d1d9; white-space: nowrap; }
.pop h3 svg { width: 18px; height: 18px; margin-left: 2px; }
.pop p { margin-top: 8.500px; font-size: 13.400px; line-height: 21.200px; white-space: nowrap; }
.pop button { display: block; margin-top: 17px; width: 70px; height: 32px; padding: 0; border: 1px solid #30363d; border-radius: 6px; background: #21262d; color: #58a6ff; font-size: 13.100px; font-weight: 600; }
.repo-tabs { flex: none; display: grid; grid-template-columns: 86.700px 93px 133.500px 101.500px 103.500px 84px 103px 104px 105px; height: 50px; padding-left: 32px; border-bottom: 1px solid #21262d; color: #8b949e; font-size: 13.100px; }
.repo-tabs a { display: flex; align-items: center; gap: 7px; padding-left: 16px; }
.gh .repo-tabs a { color: #8b949e; }
.repo-tabs svg { width: 16px; height: 16px; color: #6e7681; }
.gh .repo-tabs .on, .repo-tabs .on svg { color: #c9d1d9; font-weight: 600; }
.repo-tabs .on { box-shadow: inset 0 -2px #f78166; }
.upload { width: 1216px; margin: 34px auto 0; }
.crumb { height: 40.500px; font-size: 15px; color: #8b949e; }
.crumb a { font-weight: 600; }
.crumb i { margin-left: 6px; }
.drop { display: flex; flex-direction: column; align-items: center; height: 280.500px; padding-top: 81px; border: 1px solid #30363d; border-radius: 6px; color: #8b949e; }
.drop svg { width: 24px; height: 30px; }
.drop h2 { margin-top: 12px; font-size: 22.700px; line-height: 36px; font-weight: 600; color: #c9d1d9; }
.drop p { margin-top: 3.500px; font-size: 17px; line-height: 24px; }
.commit { display: flex; gap: 16px; margin-top: 20.500px; }
.commit-ava { width: 48px; height: 48px; }
.commit-form { flex: 1; }
.commit-box { position: relative; height: 226px; padding: 17.300px 17px 0 16px; border: 1px solid #30363d; border-radius: 6px; }
.notch { position: absolute; left: -6px; top: 15px; width: 11px; height: 11px; border: 1px solid #30363d; border-width: 0 0 1px 1px; background: #0d1117; transform: rotate(45deg); }
.commit-box h3 { height: 38.700px; font-size: 19px; line-height: 28px; font-weight: 600; }
.field { height: 32px; padding: 0 12px; line-height: 29px; border: 1px solid #21262d; border-radius: 6px; background: #080b12; color: #484f58; }
.area { display: flex; justify-content: space-between; align-items: flex-end; height: 99px; margin-top: 10px; padding: 4.500px 2px 2px 12px; }
.area span { align-self: flex-start; }
.area svg { width: 8px; height: 8px; fill: none; stroke: #8b949e; }
.btns { display: flex; gap: 4px; margin-top: 8px; }
.btn { height: 32px; border: 1px solid #30363d; border-radius: 6px; padding: 0; font-size: 13.200px; font-weight: 600; background: #21262d; }
.go { width: 140px; background: #238636; border-color: #2ea043; color: #fff; }
.no { width: 76.500px; color: #f85149; }
.gh-foot { display: grid; grid-template-columns: 519px auto 521px; justify-content: space-between; align-items: center; width: 1248px; height: 82px; margin: 40px auto 0; padding-top: 22px; border-top: 1px solid #21262d; font-size: 11.400px; color: #8b949e; }
.gh-foot div { display: flex; justify-content: space-between; padding-bottom: 4px; }
.gh-foot svg { width: 24px; height: 24px; color: #30363d; }
.monitor-side .scrollbar { padding: 7px 0 8px; color: #a3a3a3; }
.monitor-side .scrollbar i { width: 13px; height: 872px; margin: 6px 0 auto; }
.monitor-side .scrollbar svg:last-child { color: #505050; }
```
